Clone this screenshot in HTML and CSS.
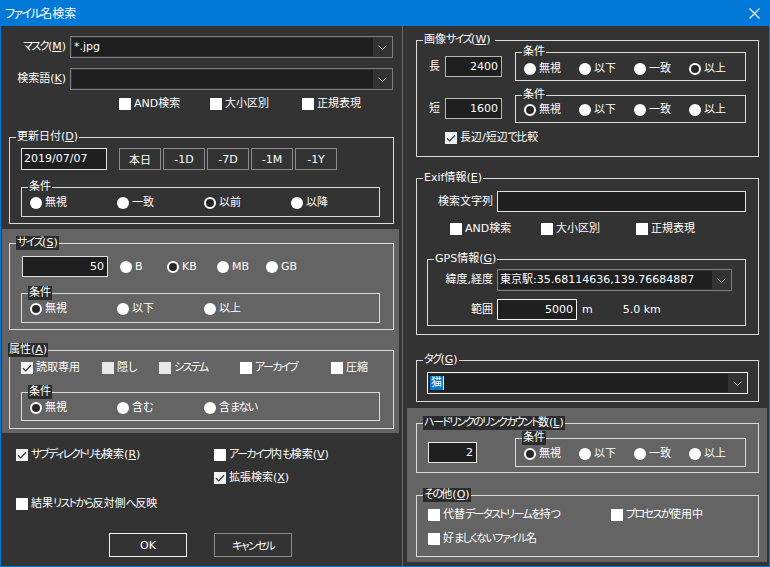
FILE: index.html
```html
<!DOCTYPE html>
<html lang="ja">
<head>
<meta charset="utf-8">
<title>ファイル名検索</title>
<link rel="stylesheet" href="styles.css">
</head>
<body>
<div class="window">
  <div class="titlebar">
    <span class="title"><span class="k">ファイル</span>名検索</span>
    <svg class="close" width="11" height="11" viewBox="0 0 11 11"><path d="M0.5 0.5L10.5 10.5M10.5 0.5L0.5 10.5" stroke="#fff" stroke-width="1.1" fill="none"/></svg>
  </div>
  <div class="body">
    <div class="left">
      <div class="frow r-mask">
        <span class="lbl w-mask"><span class="k">マスク</span>(<u>M</u>)</span>
        <div class="combo c-mask"><span class="cf">*.jpg</span><span class="ca"><svg width="9" height="5" viewBox="0 0 9 5"><path d="M0.5 0.5L4.5 4.5L8.5 0.5"/></svg></span></div>
      </div>
      <div class="frow r-kw">
        <span class="lbl w-mask">検索語(<u>K</u>)</span>
        <div class="combo c-mask"><span class="cf"></span><span class="ca"><svg width="9" height="5" viewBox="0 0 9 5"><path d="M0.5 0.5L4.5 4.5L8.5 0.5"/></svg></span></div>
      </div>
      <div class="checks r-opt">
        <span class="cb"><i></i>AND検索</span>
        <span class="cb"><i></i>大小区別</span>
        <span class="cb"><i></i>正規表現</span>
      </div>

      <fieldset class="grp g-date">
        <legend>更新日付(<u>D</u>)</legend>
        <div class="date-row">
          <div class="tb tb-date">2019/07/07</div>
          <div class="btns">
            <span class="btn">本日</span><span class="btn">-1D</span><span class="btn">-7D</span><span class="btn">-1M</span><span class="btn">-1Y</span>
          </div>
        </div>
        <fieldset class="grp sub g-cond-l g-date-cond">
          <legend>条件</legend>
          <div class="radios r87 rd-date">
            <span class="rb"><i></i>無視</span>
            <span class="rb"><i></i>一致</span>
            <span class="rb on"><i></i>以前</span>
            <span class="rb"><i></i>以降</span>
          </div>
        </fieldset>
      </fieldset>

      <div class="panel p-left">
        <fieldset class="grp g-size">
          <legend><span class="k">サイズ</span>(<u>S</u>)</legend>
          <div class="size-row">
            <div class="tb tb-size num">50</div>
            <div class="radios units">
              <span class="rb"><i></i>B</span>
              <span class="rb on"><i></i>KB</span>
              <span class="rb"><i></i>MB</span>
              <span class="rb"><i></i>GB</span>
            </div>
          </div>
          <fieldset class="grp sub g-cond-l g-size-cond">
            <legend>条件</legend>
            <div class="radios r87 rd-size">
              <span class="rb on"><i></i>無視</span>
              <span class="rb"><i></i>以下</span>
              <span class="rb"><i></i>以上</span>
            </div>
          </fieldset>
        </fieldset>

        <fieldset class="grp g-attr">
          <legend class="lg-attr">属性(<u>A</u>)</legend>
          <div class="checks attr-checks">
            <span class="cb on"><i><svg viewBox="0 0 12 12"><path d="M2 6.2L4.7 8.9L10 3.2"/></svg></i>読取専用</span>
            <span class="cb dim"><i></i>隠<span class="k">し</span></span>
            <span class="cb dim"><i></i><span class="k">システム</span></span>
            <span class="cb"><i></i><span class="k">アーカイブ</span></span>
            <span class="cb"><i></i>圧縮</span>
          </div>
          <fieldset class="grp sub g-cond-l g-attr-cond">
            <legend>条件</legend>
            <div class="radios r87 rd-attr">
              <span class="rb on"><i></i>無視</span>
              <span class="rb"><i></i>含<span class="k">む</span></span>
              <span class="rb"><i></i>含<span class="k">まない</span></span>
            </div>
          </fieldset>
        </fieldset>
      </div>

      <div class="opts o1">
        <span class="cb on"><i><svg viewBox="0 0 12 12"><path d="M2 6.2L4.7 8.9L10 3.2"/></svg></i><span class="k">サブディレクトリも</span>検索(<u>R</u>)</span>
        <span class="cb"><i></i><span class="k">アーカイブ</span>内<span class="k">も</span>検索(<u>V</u>)</span>
      </div>
      <div class="opts o2">
        <span class="cb on"><i><svg viewBox="0 0 12 12"><path d="M2 6.2L4.7 8.9L10 3.2"/></svg></i>拡張検索(<u>X</u>)</span>
      </div>
      <div class="opts o3">
        <span class="cb"><i></i>結果<span class="k">リストから</span>反対側<span class="k">へ</span>反映</span>
      </div>
      <div class="buttons">
        <span class="dbtn default">OK</span>
        <span class="dbtn"><span class="k">キャンセル</span></span>
      </div>
    </div>

    <div class="divider"></div>

    <div class="right">
      <fieldset class="grp g-img">
        <legend>画像<span class="k">サイズ</span>(<u>W</u>)&nbsp;</legend>
        <div class="img-row ir1">
          <div class="dimf d1"><span class="dl">長</span><div class="tb tb-dim num">2400</div></div>
          <fieldset class="grp sub g-cond-r c1">
            <legend>条件</legend>
            <div class="radios r55 rd-c1">
              <span class="rb"><i></i>無視</span>
              <span class="rb"><i></i>以下</span>
              <span class="rb"><i></i>一致</span>
              <span class="rb on"><i></i>以上</span>
            </div>
          </fieldset>
        </div>
        <div class="img-row ir2">
          <div class="dimf d2"><span class="dl">短</span><div class="tb tb-dim num">1600</div></div>
          <fieldset class="grp sub g-cond-r c2">
            <legend>条件</legend>
            <div class="radios r55 rd-c2">
              <span class="rb on"><i></i>無視</span>
              <span class="rb"><i></i>以下</span>
              <span class="rb"><i></i>一致</span>
              <span class="rb"><i></i>以上</span>
            </div>
          </fieldset>
        </div>
        <div class="checks cmp-row">
          <span class="cb on"><i><svg viewBox="0 0 12 12"><path d="M2 6.2L4.7 8.9L10 3.2"/></svg></i>長辺/短辺<span class="k">で</span>比較</span>
        </div>
      </fieldset>

      <fieldset class="grp g-exif">
        <legend>Exif情報(<u>E</u>)</legend>
        <div class="frow ex-row">
          <span class="lbl w-exif">検索文字列</span>
          <div class="tb tb-exif"></div>
        </div>
        <div class="checks ex-checks">
          <span class="cb"><i></i>AND検索</span>
          <span class="cb"><i></i>大小区別</span>
          <span class="cb"><i></i>正規表現</span>
        </div>
        <fieldset class="grp sub g-gps">
          <legend>GPS情報(<u>G</u>)</legend>
          <div class="frow gps1">
            <span class="lbl w-gps">緯度,経度</span>
            <div class="combo c-gps"><span class="cf">東京駅:35.68114636,139.76684887</span><span class="ca"><svg width="9" height="5" viewBox="0 0 9 5"><path d="M0.5 0.5L4.5 4.5L8.5 0.5"/></svg></span></div>
          </div>
          <div class="frow gps2">
            <span class="lbl w-gps">範囲</span>
            <div class="tb tb-range num">5000</div>
            <span class="unit-m">m</span>
            <span class="km">5.0 km</span>
          </div>
        </fieldset>
      </fieldset>

      <fieldset class="grp g-tag">
        <legend><span class="k">タグ</span>(<u>G</u>)</legend>
        <div class="combo c-tag"><span class="cf"><span class="sel">猫</span><span class="caret"></span></span><span class="ca"><svg width="9" height="5" viewBox="0 0 9 5"><path d="M0.5 0.5L4.5 4.5L8.5 0.5"/></svg></span></div>
      </fieldset>

      <div class="panel p-right">
        <fieldset class="grp g-hard">
          <legend><span class="k">ハードリンクのリンクカウント</span>数(<u>L</u>)</legend>
          <div class="hard-row">
            <div class="tb tb-hard num">2</div>
            <fieldset class="grp sub g-cond-r c3">
              <legend>条件</legend>
              <div class="radios r55 rd-c3">
                <span class="rb on"><i></i>無視</span>
                <span class="rb"><i></i>以下</span>
                <span class="rb"><i></i>一致</span>
                <span class="rb"><i></i>以上</span>
              </div>
            </fieldset>
          </div>
        </fieldset>
        <fieldset class="grp g-other">
          <legend><span class="k">その</span>他(<u>O</u>)</legend>
          <div class="checks oth1">
            <span class="cb"><i></i>代替<span class="k">データストリームを</span>持<span class="k">つ</span></span>
            <span class="cb"><i></i><span class="k">プロセスが</span>使用中</span>
          </div>
          <div class="checks oth2">
            <span class="cb"><i></i>好<span class="k">ましくないファイル</span>名</span>
          </div>
        </fieldset>
      </div>
    </div>
  </div>
</div>
</body>
</html>
```
FILE: styles.css
```css
* { box-sizing: border-box; }
html, body { margin: 0; padding: 0; background: #333333; }
body {
  font-family: "DejaVu Sans", "Noto Sans CJK JP", sans-serif;
  font-size: 11px;
  color: #ffffff;
  font-feature-settings: "palt" 1;
}
u { text-underline-offset: 1px; }
.k { letter-spacing: -1.6px; }

.grp {
  margin: 0;
  padding: 0;
  border: 1px solid #dcdcdc;
  min-width: 0;
}
.grp > legend {
  padding: 0 1px;
  margin-left: 6px;
  line-height: 14px;
  height: 14px;
  font-size: 11px;
}
.panel { background: #646464; }
.panel .grp > legend { background: #2b2b2b; }

.window {
  width: 770px;
  height: 567px;
  border: 1px solid #0078d7;
  background: #333333;
  display: flex;
  flex-direction: column;
  overflow: hidden;
}
.titlebar {
  height: 25px;
  flex: none;
  background: #0078d7;
  display: flex;
  align-items: center;
  justify-content: space-between;
  padding-left: 4px;
}
.title { font-size: 12px; line-height: 16px; }
.close { margin-right: 9px; }

.body { flex: 1; display: flex; }
.left { width: 401px; flex: none; }
.divider { width: 1px; flex: none; background: #6a6a6a; }
.right { width: 366px; flex: none; }

/* generic */
.frow { display: flex; align-items: center; }
.lbl { text-align: right; white-space: nowrap; line-height: 16px; }
.checks, .radios, .opts { display: grid; align-items: center; height: 16px; line-height: 16px; }
.cb, .rb { display: flex; align-items: center; white-space: nowrap; }
.cb > i, .rb > i { flex: none; width: 12px; height: 12px; margin-right: 3px; background: #ffffff; display: block; }
.rb > i { border-radius: 50%; }
.rb.on > i { background: #262626; border: 2px solid #ffffff; }
.cb.dim > i { background: #e8e8e8; }
.cb.on > i { background: #f2f2f2; }
.cb i svg { display: block; width: 12px; height: 12px; }
.cb i svg path { fill: none; stroke: #3a3a3a; stroke-width: 1.3; }

.combo {
  display: flex;
  height: 22px;
  border: 1px solid #7e7e7e;
  padding: 1px 0 1px 1px;
}
.cf { flex: 1; background: #1f1f1f; padding-left: 2px; line-height: 18px; white-space: nowrap; overflow: hidden; }
.ca { width: 19px; flex: none; display: flex; align-items: center; justify-content: center; }
.ca svg path { fill: none; stroke: #a8a8a8; stroke-width: 1; }

.tb {
  height: 21px;
  border: 1px solid #e2e2e2;
  background: #1f1f1f;
  line-height: 19px;
  padding: 0 3px;
  white-space: nowrap;
}
.tb.num { text-align: right; }

/* left column */
.r-mask { margin-top: 10px; }
.r-kw { margin-top: 10px; }
.w-mask { width: 65px; margin-right: 4px; }
.c-mask { width: 323px; }
.r-opt { margin-top: 6px; padding-left: 118px; grid-template-columns: 91px 92px auto; }

.g-date { margin: 18px 0 0 8px; width: 385px; padding-bottom: 6px; }
.date-row { display: flex; padding: 4px 0 0 11px; height: 26px; }
.tb-date { width: 86px; height: 22px; line-height: 20px; padding-left: 2px; }
.btns { display: flex; gap: 2px; margin-left: 12px; }
.btn {
  width: 42px; height: 22px;
  border: 1px solid #8a8a8a;
  display: flex; align-items: center; justify-content: center;
}
.g-cond-l { width: 359px; margin-left: 11px; }
.g-date-cond { margin-top: 10px; }
.r87 { grid-template-columns: 87px 87px 87px auto; margin-left: 8px; }
.rd-date { margin-top: 1px; margin-bottom: 5px; }

.p-left { margin: 5px 0 0 1px; width: 397px; padding: 7px 0 4px 0; }
.g-size { margin-left: 7px; width: 385px; padding-bottom: 6px; }
.size-row { display: flex; align-items: center; padding: 6px 0 0 12px; }
.tb-size { width: 86px; }
.units { margin-left: 12px; grid-template-columns: 47px 50px 49px auto; }
.g-size-cond { margin-top: 9px; }
.rd-size { margin-top: 1px; margin-bottom: 5px; }

.g-attr { margin: 13px 0 0 7px; width: 385px; padding-bottom: 7px; }
.grp > .lg-attr { margin-left: -2px; }
.attr-checks { margin-top: 3px; padding-left: 11px; grid-template-columns: 81px 57px 81px 91px auto; }
.g-attr-cond { margin-top: 9px; }
.rd-attr { margin-top: 1px; margin-bottom: 4px; }

.opts { padding-left: 15px; grid-template-columns: 198px auto; }
.o1 { margin-top: 14px; }
.o2 { margin-top: 7px; padding-left: 213px; }
.o3 { margin-top: 10px; }
.buttons { display: flex; gap: 27px; margin-top: 21px; padding-left: 108px; }
.dbtn {
  width: 78px; height: 24px;
  border: 1px solid #8a8a8a;
  display: flex; align-items: center; justify-content: center;
}
.dbtn.default { border-color: #f0f0f0; }

/* right column */
.g-img { margin: 7px 0 0 13px; width: 343px; padding-bottom: 10px; }
.img-row { display: flex; align-items: flex-start; }
.ir1 { margin-top: -2px; }
.ir2 { margin-top: 7px; }
.dimf { display: flex; align-items: center; margin-left: 12px; }
.d1 { margin-top: 11px; }
.d2 { margin-top: 10px; }
.dl { width: 12px; margin-right: 4px; line-height: 16px; }
.tb-dim { width: 57px; border-color: #b8b8b8; }
.g-cond-r { width: 231px; margin-left: 13px; }
.r55 { grid-template-columns: 55px 55px 55px auto; margin-left: 8px; }
.rd-c1 { margin-top: 2px; margin-bottom: 3px; }
.rd-c2 { margin-top: 0; margin-bottom: 4px; }
.cmp-row { margin-top: 7px; padding-left: 28px; grid-template-columns: auto; }

.g-exif { margin: 14px 0 0 13px; width: 343px; padding-bottom: 8px; }
.ex-row { padding-top: 6px; }
.w-exif { width: 76px; margin-right: 4px; }
.tb-exif { width: 249px; }
.ex-checks { margin-top: 9px; padding-left: 33px; grid-template-columns: 91px 95px auto; }
.g-gps { margin: 15px 0 0 10px; width: 319px; padding-bottom: 5px; }
.gps1 { padding-top: 3px; }
.w-gps { width: 65px; margin-right: 4px; }
.c-gps { width: 235px; }
.c-gps .cf { padding-left: 1px; }
.gps2 { margin-top: 8px; }
.tb-range { width: 80px; border-color: #f2f2f2; }
.unit-m { margin-left: 5px; line-height: 16px; }
.km { margin-left: 30px; line-height: 16px; }

.g-tag { margin: 18px 0 0 13px; width: 343px; padding-bottom: 7px; }
.c-tag { width: 321px; margin: 5px 0 0 10px; border-color: #f2f2f2; }
.sel { background: #0078d7; display: inline-block; line-height: 14px; padding: 0 1px; }
.caret { display: inline-block; width: 1px; height: 14px; background: #ffffff; vertical-align: top; margin-top: 2px; }
.c-tag .cf { padding-left: 1px; }

.p-right { margin: 6px 0 0 4px; width: 360px; padding: 8px 0 5px 0; }
.g-hard { margin-left: 9px; width: 343px; padding-bottom: 5px; }
.hard-row { display: flex; align-items: flex-start; }
.tb-hard { width: 49px; margin: 12px 0 0 11px; border-color: #e8e8e8; }
.c3 { margin: 1px 0 0 38px; }
.rd-c3 { margin-top: 1px; margin-bottom: 4px; }

.g-other { margin: 15px 0 0 9px; width: 343px; padding-bottom: 9px; }
.oth1 { margin-top: 5px; padding-left: 11px; grid-template-columns: 183px auto; }
.oth2 { margin-top: 8px; padding-left: 11px; grid-template-columns: auto; }
```
